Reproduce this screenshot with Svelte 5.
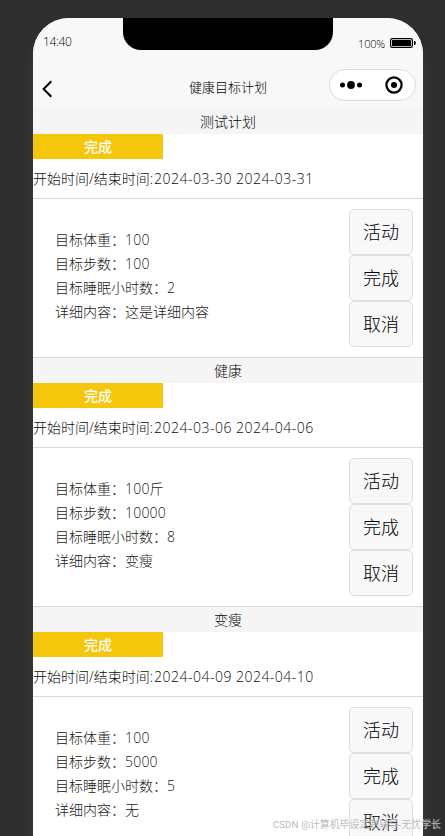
<script>
  const plans = [
    { title: '测试计划', start: '2024-03-30', end: '2024-03-31', weight: '100', unit: '', steps: '100', sleep: '2', detail: '这是详细内容' },
    { title: '健康', start: '2024-03-06', end: '2024-04-06', weight: '100', unit: '斤', steps: '10000', sleep: '8', detail: '变瘦' },
    { title: '变瘦', start: '2024-04-09', end: '2024-04-10', weight: '100', unit: '', steps: '5000', sleep: '5', detail: '无' }
  ];
  const actions = ['活动', '完成', '取消'];
</script>

<div class="desk">
  <div class="phone">
    <header>
      <div class="status">
        <span class="time">14:40</span>
        <div class="notch"></div>
        <div class="power">
          <span>100%</span>
          <svg width="26" height="10" viewBox="0 0 26 10">
            <rect x=".6" y=".6" width="21.8" height="8.8" rx="1.6" fill="none" stroke="#000" stroke-width="1.2" />
            <rect x="2" y="2" width="19" height="6" rx=".6" />
            <path d="M24 3h.6q1.2 0 1.2 2t-1.2 2H24z" />
          </svg>
        </div>
      </div>
      <div class="nav">
        <svg class="back" width="12" height="18" viewBox="0 0 12 18">
          <path d="M9.3 1.2L1.6 9l7.7 7.8" fill="none" stroke="#000" stroke-width="2" />
        </svg>
        <h1>健康目标计划</h1>
        <div class="capsule">
          <svg width="22" height="8" viewBox="0 0 22 8">
            <circle cx="2.5" cy="4" r="2.5" /><circle cx="11" cy="4" r="3.9" /><circle cx="19.5" cy="4" r="2.5" />
          </svg>
          <svg width="18" height="18" viewBox="0 0 18 18">
            <circle cx="9" cy="9" r="7.6" fill="none" stroke="#000" stroke-width="2.2" /><circle cx="9" cy="9" r="3" />
          </svg>
        </div>
      </div>
    </header>

    <main>
      {#each plans as plan}
        <section>
          <h2>{plan.title}</h2>
          <div class="badge">完成</div>
          <p class="range">开始时间/结束时间:<span class="date">{plan.start} {plan.end}</span></p>
          <div class="body">
            <ul>
              <li>目标体重：<span class="num">{plan.weight}</span>{plan.unit}</li>
              <li>目标步数：<span class="num">{plan.steps}</span></li>
              <li>目标睡眠小时数：<span class="num">{plan.sleep}</span></li>
              <li>详细内容：{plan.detail}</li>
            </ul>
            <div class="actions">
              {#each actions as action}
                <button>{action}</button>
              {/each}
            </div>
          </div>
        </section>
      {/each}
    </main>
  </div>
  <div class="watermark">CSDN @计算机毕设定制辅导-无忧学长</div>
</div>

<style>
  .desk {
    position: relative;
    box-sizing: border-box;
    width: 445px;
    height: 836px;
    padding: 18px 22px 0 33px;
    overflow: hidden;
    background: #2e2e2e;
    font-family: "Open Sans", "Noto Sans CJK SC", sans-serif;
    font-weight: 300;
    color: #0c0c0c;
  }
  .phone {
    width: 390px;
    height: 900px;
    overflow: hidden;
    border-radius: 36px;
    background: #fff;
    box-shadow: 0 16px 14px rgba(255, 255, 255, 0.08);
  }
  header {
    height: 91px;
    background: #f8f8f8;
    color: #000;
  }
  .status {
    display: flex;
    justify-content: space-between;
    height: 44px;
  }
  .time {
    width: 80px;
    padding-left: 10px;
    font-size: 12px;
    line-height: 48px;
    letter-spacing: -0.35px;
  }
  .notch {
    width: 210px;
    height: 32px;
    border-radius: 0 0 18px 18px;
    background: #000;
  }
  .power {
    display: flex;
    justify-content: flex-end;
    align-items: center;
    gap: 5px;
    width: 83px;
    height: 50px;
    padding-right: 7px;
    font-size: 11px;
    letter-spacing: -0.2px;
  }
  .power span {
    padding-top: 1px;
  }
  .nav {
    display: grid;
    grid-template-columns: 95px 200px 95px;
    align-items: center;
    height: 47px;
  }
  .back {
    margin: 6px 0 0 9px;
  }
  h1 {
    margin: 3px 0 0;
    font-size: 13px;
    font-weight: 300;
    line-height: 20px;
    text-align: center;
  }
  .capsule {
    display: flex;
    justify-content: space-between;
    align-items: center;
    box-sizing: border-box;
    width: 87px;
    height: 32px;
    margin: -1px 0 0 1px;
    padding: 0 12px 0 10px;
    border: 1px solid #ddd;
    border-radius: 16px;
    background: #fff;
  }
  section {
    height: 248px;
    border-bottom: 1px solid #d9d9d9;
  }
  h2 {
    height: 25px;
    margin: 0;
    background: #f5f5f5;
    font-size: 14px;
    font-weight: 300;
    line-height: 25px;
    text-align: center;
  }
  .badge {
    width: 130px;
    height: 25px;
    background: #f4c60c;
    color: #fff;
    font-size: 14px;
    font-weight: 500;
    line-height: 26px;
    text-align: center;
  }
  .range {
    height: 39px;
    margin: 0;
    border-bottom: 1px solid #d9d9d9;
    font-size: 14px;
    line-height: 39px;
    white-space: nowrap;
  }
  .date {
    padding-left: 1px;
    letter-spacing: 0.48px;
  }
  .num {
    letter-spacing: 0.2px;
  }
  .body {
    display: flex;
    justify-content: space-between;
    padding: 10px 10px 0 22px;
  }
  ul {
    margin: 0;
    padding: 19px 0 0;
    list-style: none;
    color: #181818;
    font-size: 14px;
    line-height: 24px;
  }
  .actions {
    display: flex;
    flex-direction: column;
  }
  button {
    box-sizing: border-box;
    width: 64px;
    height: 46px;
    padding: 1px 0 0;
    border: 1px solid #dedede;
    border-radius: 5px;
    background: #f8f8f8;
    color: #000;
    font: inherit;
    font-size: 18px;
    line-height: 43px;
  }
  .watermark {
    position: absolute;
    right: 4px;
    bottom: 3px;
    color: rgba(178, 178, 178, 0.9);
    font-family: Roboto, "Noto Sans CJK SC", sans-serif;
    font-size: 9.9px;
    font-weight: 400;
    line-height: 16px;
    white-space: nowrap;
    text-shadow: 0 0 1px rgba(255, 255, 255, 0.5);
  }
</style>
